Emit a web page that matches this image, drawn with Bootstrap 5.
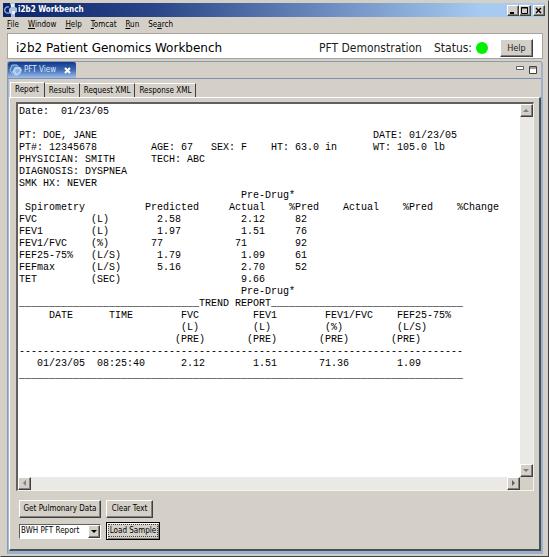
<!DOCTYPE html>
<html lang="en">
<head>
<meta charset="utf-8">
<meta name="viewport" content="width=device-width, initial-scale=1">
<title>i2b2 Workbench</title>
<link href="https://cdn.jsdelivr.net/npm/bootstrap@5.3.0/dist/css/bootstrap.min.css" rel="stylesheet">
<style>
:root { --face: #d4d0c8; --edge: #404040; --shade: #808080; }
body { font: 8px/12px "DejaVu Sans Condensed", "DejaVu Sans", sans-serif; color: #000; background: var(--face); }
button, select { font: inherit; color: inherit; }
.window-frame { border: 1px solid; border-color: #d4d0c8 #404040 #404040 #d4d0c8; padding: 2px 3px 2px 2px; height: 100vh; }
.title-strip { height: 14px; background: linear-gradient(90deg, #0a246a, #2a4688 28%, #a6caf0 88%); color: #fff; font-weight: 700; }
.app-icon { margin-right: 1px; }
.bevel { background: var(--face); border: 1px solid; border-color: #fff var(--edge) var(--edge) #fff; box-shadow: inset -1px -1px var(--shade); }
.caption-btn { width: 12px; height: 11px; }
.caption-btn.apart { margin-left: 2px; }
.menu-strip { height: 16px; padding-left: 4px; gap: 9px; }
.menu-strip a { color: #000; text-decoration: none; }
.work-area { padding: 0 2px 0 4px; gap: 2px; }
.banner { height: 26px; background: #fff; border: 1px solid #a8a49c; padding: 3px 9px 0 8px; font-size: 12px; color: #1c1c1c; }
.banner h1 { font: 12px/20px "DejaVu Sans", sans-serif; color: #000; }
.status-dot { width: 12px; height: 12px; background: #00f000; }
.help-btn { width: 33px; height: 18px; font-size: 9px; }
.view-panel { border: 1px solid #8c9cb0; border-bottom: 3px solid #9db2c8; border-right: 2px solid #9db2c8; border-radius: 3px 3px 0 0; }
.view-head { height: 17px; border-bottom: 1px solid #7a92b4; padding-right: 3px; }
.view-tab { width: 68px; background: linear-gradient(#12388a, #3e6cb4 50%, #a4c0ec); color: #dce8ff; padding-left: 1px; gap: 1px; border-radius: 2px 2px 0 0; }
.view-body { border-left: 1px solid #9db8dc; padding-top: 3px; }
.folder-tabs { padding-left: 1px; height: 15px; }
.folder-tab { background: none; border: 0; border-top: 1px solid #fff; border-right: 1px solid var(--edge); height: 14px; padding: 0 4px; white-space: nowrap; }
.folder-tab.active { border-left: 1px solid #fff; height: 16px; padding: 0 5px 2px 4px; margin-bottom: -1px; background: var(--face); }
.folder-page { border: solid; border-width: 1px 2px 2px 1px; border-color: #fff #44505c #44505c #fff; padding: 4px 5px 9px 6px; }
.report-box { display: grid; grid-template: minmax(0, 1fr) 13px / minmax(0, 1fr) 13px; border: solid; border-width: 2px 1px 1px 2px; border-color: #606060 #f4f2ee #f4f2ee #606060; }
.report-text { font: 10px/12px "Liberation Mono", monospace; border: 0; outline: 0; resize: none; background: #fff; color: #000; padding: 2px 0 0 1px; white-space: pre; overflow: hidden; }
.scroll-track { background: #ebe9e5; }
.scroll-btn { width: 13px; height: 13px; }
.control-rows { padding: 9px 0 0 3px; gap: 4px; }
.control-row { gap: 5px; }
.tool-btn { height: 18px; white-space: nowrap; }
.tool-btn.wide { width: 82px; }
.tool-btn.narrow { width: 47px; }
.tool-btn.sample { width: 54px; border-color: #000; box-shadow: inset 1px 1px #fff, inset -1px -1px var(--shade); }
.tool-btn.sample span { outline: 1px dotted #404040; outline-offset: 1px; }
.picker { width: 82px; height: 15px; border: 1px solid; border-color: #606060 #fff #fff #606060; background: #fff; }
.picker select { appearance: none; background: transparent; border: 0; outline: 0; padding: 0 0 0 1px; min-width: 0; white-space: nowrap; }
.picker-arrow { width: 12px; flex: none; pointer-events: none; }
</style>
<script src="https://cdn.jsdelivr.net/npm/bootstrap@5.3.0/dist/js/bootstrap.bundle.min.js"></script>
</head>
<body>
<div class="window-frame d-flex flex-column">
  <header class="title-strip d-flex align-items-center flex-shrink-0">
    <svg class="app-icon flex-shrink-0" width="14" height="14" viewBox="0 0 14 14" aria-hidden="true"><path d="M6 4A3.200 3.200 0 1 0 6 10" fill="none" stroke="#a8c4e8" stroke-width="1.2"/><path d="M7 0h5v4l2 1v4l-2 1v4H8v-3l-2-1V6l2-2z" fill="#a9c1df"/><path d="M8 1h3v3H8zM9 8h3v3H9z" fill="#e6effa"/></svg>
    <span class="flex-grow-1">i2b2 Workbench</span>
    <button class="caption-btn bevel p-0 d-flex" aria-label="Minimize"><svg width="9" height="9"><path d="M2 7h4" stroke="#000" stroke-width="2"/></svg></button>
    <button class="caption-btn bevel p-0 d-flex" aria-label="Maximize"><svg width="10" height="9"><path d="M1.500 1.500h6v6h-6zM1 2h7" fill="none" stroke="#000"/></svg></button>
    <button class="caption-btn apart bevel p-0 d-flex" aria-label="Close"><svg width="10" height="9"><path d="M2 2l5 5M7 2l-5 5" stroke="#000" stroke-width="1.400"/></svg></button>
  </header>
  <nav class="menu-strip d-flex align-items-center flex-shrink-0" aria-label="Main menu">
    <a href="#"><u>F</u>ile</a><a href="#"><u>W</u>indow</a><a href="#"><u>H</u>elp</a><a href="#"><u>T</u>omcat</a><a href="#"><u>R</u>un</a><a href="#">Se<u>a</u>rch</a>
  </nav>
  <main class="work-area d-flex flex-column flex-grow-1">
    <section class="banner d-flex align-items-center flex-shrink-0">
      <h1 class="m-0 flex-grow-1">i2b2 Patient Genomics Workbench</h1>
      <span class="me-2">PFT Demonstration</span>
      <span class="ms-1">Status:</span>
      <span class="status-dot rounded-circle me-2 ms-1" role="img" aria-label="Connected"></span>
      <button class="help-btn bevel p-0 ms-1">Help</button>
    </section>
    <section class="view-panel d-flex flex-column flex-grow-1">
      <div class="view-head d-flex flex-shrink-0">
        <div class="view-tab d-flex align-items-center text-nowrap">
          <svg class="flex-shrink-0" width="14" height="14" viewBox="0 0 14 14" aria-hidden="true"><path d="M3 2h5l3 5-3 5H4L1 7z" fill="#4f80bd" stroke="#9fc0e6"/><path d="M6 4h5l2 3-2 4-4 2-4-4z" fill="#b7d3ef"/><path d="M7 6h3l1 2-3 3-2-3z" fill="#8fb3de"/></svg>
          <span class="flex-grow-1">PFT View</span>
          <button class="border-0 bg-transparent p-0 me-1 d-flex" aria-label="Close PFT View"><svg width="9" height="9"><path d="M2 2l5 5M7 2l-5 5" stroke="#fff" stroke-width="2"/></svg></button>
        </div>
        <div class="d-flex align-items-start ms-auto gap-1 pt-1">
          <button class="border-0 bg-transparent p-0 d-flex" aria-label="Minimize view"><svg width="10" height="9"><path d="M1.500 .5h7v3h-7z" fill="#fff" stroke="#606060"/></svg></button>
          <button class="border-0 bg-transparent p-0 d-flex" aria-label="Maximize view"><svg width="9" height="9"><path d="M.5 .5h7v7h-7zM.5 2h7" fill="#fff" stroke="#404040"/></svg></button>
        </div>
      </div>
      <div class="view-body d-flex flex-column flex-grow-1">
        <div class="folder-tabs d-flex align-items-end flex-shrink-0" role="tablist">
          <button class="folder-tab active" role="tab" aria-selected="true">Report</button>
          <button class="folder-tab" role="tab">Results</button>
          <button class="folder-tab" role="tab">Request XML</button>
          <button class="folder-tab" role="tab">Response XML</button>
        </div>
        <div class="folder-page d-flex flex-column flex-grow-1">
          <div class="report-box flex-grow-1">
            <textarea class="report-text" aria-label="Pulmonary function report" wrap="off" spellcheck="false">
Date:  01/23/05

PT: DOE, JANE                                              DATE: 01/23/05
PT#: 12345678         AGE: 67   SEX: F    HT: 63.0 in      WT: 105.0 lb
PHYSICIAN: SMITH      TECH: ABC
DIAGNOSIS: DYSPNEA
SMK HX: NEVER
                                     Pre-Drug*
 Spirometry          Predicted     Actual    %Pred    Actual    %Pred    %Change
FVC         (L)        2.58          2.12     82
FEV1        (L)        1.97          1.51     76
FEV1/FVC    (%)       77            71        92
FEF25-75%   (L/S)      1.79          1.09     61
FEFmax      (L/S)      5.16          2.70     52
TET         (SEC)                    9.66
                                     Pre-Drug*
______________________________TREND REPORT________________________________
     DATE      TIME        FVC         FEV1        FEV1/FVC    FEF25-75%
                           (L)         (L)         (%)         (L/S)
                          (PRE)       (PRE)       (PRE)       (PRE)
--------------------------------------------------------------------------
   01/23/05  08:25:40      2.12        1.51       71.36        1.09
__________________________________________________________________________</textarea>
            <div class="scroll-track d-flex flex-column justify-content-between">
              <button class="scroll-btn bevel p-0 d-flex" aria-label="Scroll up"><svg width="11" height="11"><path d="M2 7l3-3 3 3z" fill="#808080"/></svg></button>
              <button class="scroll-btn bevel p-0 d-flex" aria-label="Scroll down"><svg width="11" height="11"><path d="M2 4l3 3 3-3z" fill="#808080"/></svg></button>
            </div>
            <div class="scroll-track d-flex justify-content-between">
              <button class="scroll-btn bevel p-0 d-flex" aria-label="Scroll left"><svg width="11" height="11"><path d="M7 2L4 5l3 3z" fill="#808080"/></svg></button>
              <button class="scroll-btn bevel p-0 d-flex" aria-label="Scroll right"><svg width="11" height="11"><path d="M4 2l3 3-3 3z" fill="#606060"/></svg></button>
            </div>
          </div>
          <div class="control-rows d-flex flex-column">
            <div class="control-row d-flex">
              <button class="tool-btn wide bevel p-0">Get Pulmonary Data</button>
              <button class="tool-btn narrow bevel p-0">Clear Text</button>
            </div>
            <div class="control-row d-flex align-items-center">
              <div class="picker d-flex">
                <select class="flex-grow-1" aria-label="Report type"><option>BWH PFT Report</option></select>
                <span class="picker-arrow bevel d-flex"><svg width="10" height="11"><path d="M2 4h6l-3 3z" fill="#000"/></svg></span>
              </div>
              <button class="tool-btn sample bevel p-0"><span>Load Sample</span></button>
            </div>
          </div>
        </div>
      </div>
    </section>
  </main>
</div>
</body>
</html>
